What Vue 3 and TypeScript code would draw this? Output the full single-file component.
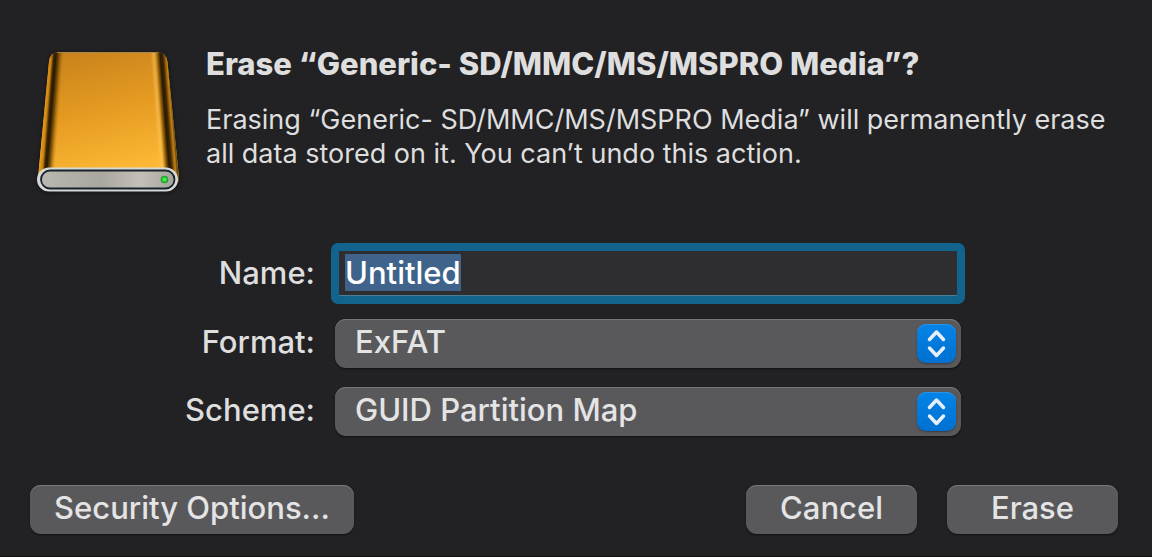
<script setup lang="ts">
import { onMounted, ref } from 'vue'

interface Choice {
  id: string
  label: string
  options: string[]
}

const device = 'Generic- SD/MMC/MS/MSPRO Media'
const name = ref('Untitled')
const nameField = ref<HTMLInputElement | null>(null)
const choices: Choice[] = [
  { id: 'format', label: 'Format:', options: ['ExFAT'] },
  { id: 'scheme', label: 'Scheme:', options: ['GUID Partition Map'] },
]
const selected = ref<Record<string, string>>({
  format: 'ExFAT',
  scheme: 'GUID Partition Map',
})

onMounted(() => {
  nameField.value?.focus()
  nameField.value?.select()
})
</script>

<template>
  <main class="dialog">
    <header class="intro">
      <svg class="drive" viewBox="0 0 146 146" aria-hidden="true">
        <defs>
          <linearGradient id="body" x1="0" y1="0" x2="0.25" y2="1">
            <stop offset="0" stop-color="#c57f1c" />
            <stop offset="0.5" stop-color="#e49a21" />
            <stop offset="1" stop-color="#ffbb37" />
          </linearGradient>
          <linearGradient id="leftEdge" gradientUnits="userSpaceOnUse" x1="14" y1="2" x2="29" y2="3.2">
            <stop offset="0" stop-color="#e69a1e" />
            <stop offset="0.18" stop-color="#c98212" />
            <stop offset="0.34" stop-color="#3a2400" />
            <stop offset="0.48" stop-color="#2a1a00" />
            <stop offset="0.68" stop-color="#5a3900" stop-opacity="0.75" />
            <stop offset="1" stop-color="#b87408" stop-opacity="0" />
          </linearGradient>
          <linearGradient id="rightEdge" gradientUnits="userSpaceOnUse" x1="115" y1="3.4" x2="133" y2="2">
            <stop offset="0" stop-color="#ffd070" stop-opacity="0" />
            <stop offset="0.2" stop-color="#ffc75a" stop-opacity="0.5" />
            <stop offset="0.36" stop-color="#b07410" />
            <stop offset="0.56" stop-color="#2a1a00" />
            <stop offset="0.7" stop-color="#3d2600" />
            <stop offset="0.9" stop-color="#c58213" />
            <stop offset="1" stop-color="#6b4a12" />
          </linearGradient>
          <linearGradient id="plate" x1="0" y1="0" x2="1" y2="0">
            <stop offset="0" stop-color="#b9b7b0" />
            <stop offset="0.45" stop-color="#aaa7a1" />
            <stop offset="0.75" stop-color="#c4c0b9" />
            <stop offset="1" stop-color="#a5a39c" />
          </linearGradient>
          <radialGradient id="led">
            <stop offset="0" stop-color="#62ff62" />
            <stop offset="0.55" stop-color="#25d135" />
            <stop offset="1" stop-color="#258b2c" />
          </radialGradient>
          <clipPath id="shell">
            <path d="M24 2 H121 Q131 2 132.500 12 L144 128 Q143 138 132 138 H15 Q3 138 3 128 L14 12 Q15 2 24 2 Z" />
          </clipPath>
        </defs>
        <g clip-path="url(#shell)">
          <rect width="146" height="140" fill="url(#body)" />
          <path d="M13 2 H30 L19 138 H2 Z" fill="url(#leftEdge)" />
          <path d="M114 2 H134 L145 138 H125 Z" fill="url(#rightEdge)" />
          <path d="M22 2.500 H123" stroke="#a98749" stroke-width="1" />
        </g>
        <rect x="2" y="117.500" width="141" height="24" rx="12" fill="#d7d9d8" />
        <rect x="6" y="120.500" width="133.500" height="18" rx="9" fill="url(#plate)" stroke="#17222a" stroke-width="1.800" />
        <circle cx="129.500" cy="129.500" r="3.800" fill="url(#led)" />
      </svg>
      <div class="message">
        <h1>Erase “{{ device }}”?</h1>
        <p>Erasing “{{ device }}” will permanently erase all data stored on it. You can’t undo this action.</p>
      </div>
    </header>

    <form class="form" @submit.prevent>
      <label for="name">Name:</label>
      <input id="name" ref="nameField" v-model="name" class="field" type="text" spellcheck="false" autocomplete="off" />
      <template v-for="choice in choices" :key="choice.id">
        <label :for="choice.id">{{ choice.label }}</label>
        <div class="popup">
          <select :id="choice.id" v-model="selected[choice.id]">
            <option v-for="option in choice.options" :key="option">{{ option }}</option>
          </select>
          <span class="stepper" aria-hidden="true">
            <svg viewBox="0 0 39 39">
              <path d="M12.500 15.500 L19.500 8 L26.500 15.500 M12.500 24 L19.500 31.500 L26.500 24" />
            </svg>
          </span>
        </div>
      </template>
    </form>

    <footer class="actions">
      <button type="button" class="security">Security Options...</button>
      <button type="button">Cancel</button>
      <button type="button">Erase</button>
    </footer>
  </main>
</template>

<style>
body {
  background: #222224;
}
</style>

<style scoped>
.dialog {
  box-sizing: border-box;
  min-height: 100vh;
  padding: 44px 34px 22px 30px;
  border-bottom: 1px solid #111112;
  background: #222224;
  color: #dededf;
  font-family: Inter, "Liberation Sans", sans-serif;
  font-size: 31px;
  font-weight: 500;
  line-height: 39px;
}

.intro {
  display: flex;
  gap: 25px;
  padding-left: 5px;
}

.drive {
  flex: none;
  width: 146px;
  height: 146px;
  margin-top: 6px;
  filter: drop-shadow(0 1px 2px #111112);
}

.message {
  flex: 1;
}

h1 {
  margin: 0;
  font-size: 31px;
  font-weight: 800;
  line-height: 39px;
}

p {
  margin: 20px 0 0;
  font-size: 27px;
  font-weight: 400;
  line-height: 34px;
}

.form {
  display: grid;
  grid-template-columns: 285px 1fr;
  column-gap: 20px;
  row-gap: 19px;
  align-items: baseline;
  margin-top: 47px;
  padding-right: 157px;
}

.form label {
  text-align: right;
}

.field {
  box-sizing: border-box;
  height: 61px;
  margin: 0 -4px -4px;
  padding: 0 6px 2px;
  border: 8px solid #12648f;
  border-radius: 7px;
  outline: none;
  background: #2e2e30;
  box-shadow: inset 0 -1px #4b7d94;
  color: #ffffff;
  font: inherit;
  caret-color: transparent;
}

.field::selection {
  background: #3f638b;
  color: #ffffff;
}

.popup {
  display: grid;
  align-items: center;
}

.popup select {
  grid-area: 1 / 1;
  width: 100%;
  padding: 0 60px 4px 20px;
  appearance: none;
}

.popup select,
.actions button {
  height: 49px;
  border: 0;
  border-radius: 11px;
  background: #59595b;
  box-shadow: inset 0 1px #78787a, 0 1px 2px #111112;
  color: #e4e4e5;
  font: inherit;
}

.stepper {
  grid-area: 1 / 1;
  justify-self: end;
  width: 39px;
  height: 39px;
  margin-right: 5px;
  border-radius: 9px;
  background: linear-gradient(#0484e8, #0070d0);
  box-shadow: inset 0 1px #2b93e6, 0 1px 2px #3b3b3d;
  pointer-events: none;
}

.stepper svg {
  display: block;
  fill: none;
  stroke: #e4effa;
  stroke-width: 3.500;
  stroke-linecap: round;
  stroke-linejoin: round;
}

.actions {
  display: flex;
  gap: 30px;
  margin-top: 49px;
}

.actions button {
  min-width: 171px;
  padding: 0 24px 4px;
}

.actions .security {
  margin-right: auto;
}
</style>
